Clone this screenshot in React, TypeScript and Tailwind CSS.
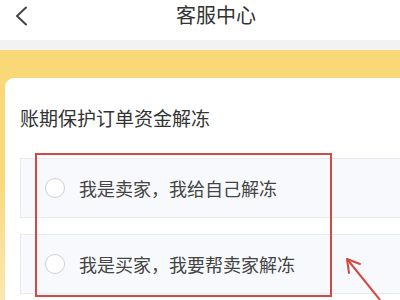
import React from 'react'

const options = ['我是卖家，我给自己解冻', '我是买家，我要帮卖家解冻']

export default function App() {
  return (
    <div
      className="relative w-[400px] h-[300px] overflow-hidden bg-white"
      style={{ fontFamily: '"Noto Sans CJK SC", "Noto Sans", sans-serif' }}
    >
      <div className="w-[432px]">
        {/* Top bar */}
        <div className="relative h-[40px] flex items-center justify-center bg-white">
          <svg
            className="absolute left-[14px] top-[6px]"
            width="14"
            height="20"
            viewBox="0 0 14 20"
            fill="none"
          >
            <path d="M12 1.5 L3 10 L12 18.5" stroke="#444" strokeWidth="2" strokeLinecap="round" strokeLinejoin="round" />
          </svg>
          <span className="text-[20px] leading-none text-[#333] -mt-[10px]">客服中心</span>
        </div>
        <div className="h-[10px] bg-[#f2f2f2]" />

        {/* Yellow area with card */}
        <div className="h-[250px] pt-[28px] pl-[5px] bg-gradient-to-b from-[#f8d877] via-[#f8d877] to-[#fbe8b0]">
          <div className="h-full bg-white rounded-tl-[9px] pl-[15px] pt-[28px]">
            <div className="text-[19px] leading-[24px] text-[#333]">账期保护订单资金解冻</div>
            <div className="mt-[28px] flex flex-col gap-[16px]">
              {options.map((o) => (
                <div
                  key={o}
                  className="h-[60px] flex items-center gap-[14px] pl-[24px] bg-[#f7f9fc] border border-[#e7ebf0]"
                >
                  <span className="w-[20px] h-[20px] rounded-full border-[1.5px] border-[#cfcfcf] bg-white" />
                  <span className="text-[18px] leading-none text-[#444]">{o}</span>
                </div>
              ))}
            </div>
          </div>
        </div>
      </div>

      {/* Annotation: red box */}
      <div className="absolute left-[35px] top-[153px] w-[297px] h-[144px] border-[2px] border-[#d24a43]" />

      {/* Annotation: arrow */}
      <svg className="absolute left-[340px] top-[252px]" width="60" height="48" viewBox="0 0 60 48" fill="none">
        <path d="M7 7 L40 48" stroke="#d24a43" strokeWidth="2" />
        <path d="M7 7 L20 12 M7 7 L9 21" stroke="#d24a43" strokeWidth="2" strokeLinecap="round" />
      </svg>
    </div>
  )
}
